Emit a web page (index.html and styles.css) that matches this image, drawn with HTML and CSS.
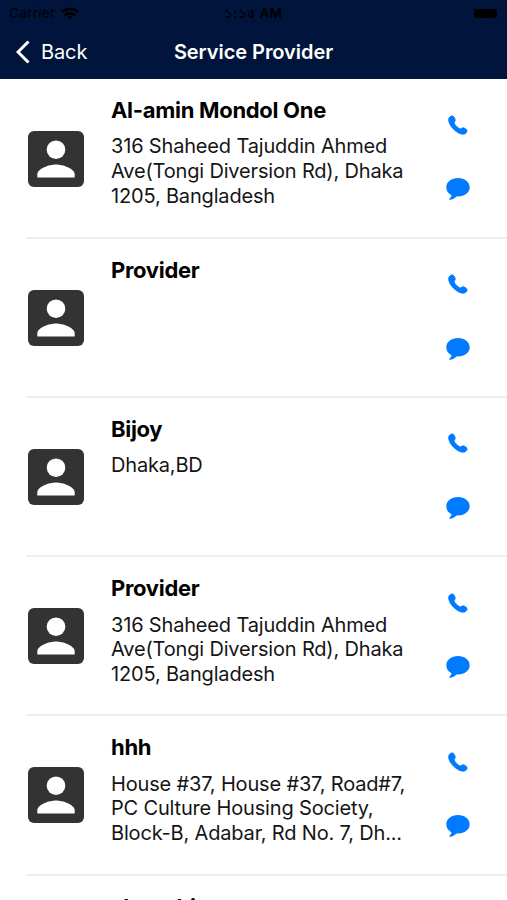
FILE: index.html
```html
<!DOCTYPE html>
<html lang="en">
<head>
<meta charset="utf-8">
<title>Service Provider</title>
<link rel="stylesheet" href="styles.css">
</head>
<body>
<svg class="defs" width="0" height="0">
  <symbol id="person" viewBox="0 0 56 56"><rect width="56" height="56" rx="6" fill="#333"/><circle cx="28" cy="18.7" r="9.3" fill="#fff"/><path d="M9.3 46.5v-3c0-6 12-10 18.7-10s18.7 4 18.7 10v3z" fill="#fff"/></symbol>
  <symbol id="phone" viewBox="0 0 20 20"><path d="M.9 3.300C1.800 1.300 4.100.200 5.400 1.400c1.100 1.200 1.900 2.900 1.800 4-.1 1-1.300 1.600-1.100 2.600.4 1.800 4.400 5.600 6 5.900 1 .2 1.700-1.100 2.800-1.100 1.200 0 3 1 3.800 2.100 1.100 1.600-.6 3.800-2.600 4.200C9.900 20.300-1.100 9.600.9 3.300z" fill="#007aff" stroke="#007aff" stroke-width=".9"/></symbol>
  <symbol id="bubble" viewBox="0 0 24 22"><path d="M12 0c6.600 0 11.700 4 11.700 9.200s-5.100 9.300-11.700 9.300l-1.600-.1C8.800 20 6.300 21.600 4 21.700c-1 0-.9-.8-.3-1.300.9-.8 1.700-2 1.800-3.100C2.200 15.600.3 12.700.3 9.200.3 4 5.400 0 12 0z" fill="#007aff"/></symbol>
</svg>
<header class="header">
  <div class="status">
    <div class="carrier"><span>Carrier</span><svg width="18" height="13" viewBox="0 0 18 13" fill="none" stroke="#000" stroke-width="2.600"><path d="M1 5a12 12 0 0 1 16 0M4 8.300a7.500 7.500 0 0 1 10 0"/><path d="M6.300 10.200a4 4 0 0 1 5.400 0L9 13z" fill="#000" stroke="none"/></svg></div>
    <time class="time">১:১৫ AM</time>
    <span class="battery"></span>
  </div>
  <nav class="nav">
    <a class="back"><svg width="14" height="24" viewBox="0 0 14 24"><path d="M12.500 1.500 2 12l10.500 10.500" fill="none" stroke="#fff" stroke-width="3"/></svg><span>Back</span></a>
    <h1 class="title">Service Provider</h1>
  </nav>
</header>
<main class="list">
  <article class="row"><svg class="avatar"><use href="#person"/></svg><div class="info"><h2>Al-amin Mondol One</h2><p>316 Shaheed Tajuddin Ahmed<br>Ave(Tongi Diversion Rd), Dhaka<br>1205, Bangladesh</p></div><div class="actions"><svg class="phone"><use href="#phone"/></svg><svg class="bubble"><use href="#bubble"/></svg></div></article>
  <article class="row"><svg class="avatar"><use href="#person"/></svg><div class="info"><h2>Provider</h2></div><div class="actions"><svg class="phone"><use href="#phone"/></svg><svg class="bubble"><use href="#bubble"/></svg></div></article>
  <article class="row"><svg class="avatar"><use href="#person"/></svg><div class="info"><h2>Bijoy</h2><p>Dhaka,BD</p></div><div class="actions"><svg class="phone"><use href="#phone"/></svg><svg class="bubble"><use href="#bubble"/></svg></div></article>
  <article class="row"><svg class="avatar"><use href="#person"/></svg><div class="info"><h2>Provider</h2><p>316 Shaheed Tajuddin Ahmed<br>Ave(Tongi Diversion Rd), Dhaka<br>1205, Bangladesh</p></div><div class="actions"><svg class="phone"><use href="#phone"/></svg><svg class="bubble"><use href="#bubble"/></svg></div></article>
  <article class="row"><svg class="avatar"><use href="#person"/></svg><div class="info"><h2>hhh</h2><p>House #37, House #37, Road#7,<br>PC Culture Housing Society,<br>Block-B, Adabar, Rd No. 7, Dh...</p></div><div class="actions"><svg class="phone"><use href="#phone"/></svg><svg class="bubble"><use href="#bubble"/></svg></div></article>
  <article class="row"><div class="info last"><h2>shaonhi</h2></div></article>
</main>
</body>
</html>
```
FILE: styles.css
```css
* { box-sizing: border-box; }
body { margin: 0; height: 900px; overflow: hidden; background: #fff; color: #000; font-family: Inter, "Liberation Sans", sans-serif; }
h1, h2, p { margin: 0; }
svg { display: block; flex: none; }
.defs { position: absolute; }
.header { height: 79px; background: #00143c; }
.status { height: 27px; display: grid; grid-template-columns: 1fr auto 1fr; align-items: center; padding: 0 10px 0 9px; font-size: 13.500px; line-height: 27px; }
.carrier { display: flex; align-items: center; gap: 6px; letter-spacing: .3px; }
.time { font-weight: 600; letter-spacing: .2px; }
.battery { justify-self: end; width: 23px; height: 9px; border-radius: 2px; background: #000; }
.nav { height: 50px; display: grid; grid-template-columns: 1fr auto 1fr; align-items: center; padding: 0 16px; color: #fff; }
.back { display: flex; align-items: center; gap: 11px; font-size: 20px; letter-spacing: -.1px; }
.title { font-size: 20px; font-weight: 600; letter-spacing: -.05px; }
.list { height: 821px; overflow: hidden; }
.row { height: 159.200px; display: flex; margin-left: 26px; border-bottom: 2px solid #efefef; }
.row:first-child { height: 159.800px; }
.avatar { width: 56px; height: 56px; margin: 51.500px 27px 0 2px; }
.row:not(:first-child) .avatar { margin-top: 51px; }
.info { width: 335px; padding-top: 16.900px; white-space: nowrap; }
.info h2 { font-size: 22px; line-height: 29px; font-weight: 650; letter-spacing: -.3px; }
.info p { margin-top: 9.500px; font-size: 20px; line-height: 24.600px; letter-spacing: -.17px; color: #151515; }
.last { margin-left: 85px; padding-top: 17px; }
.last h2 { letter-spacing: -.1px; }
.actions { display: flex; flex-direction: column; align-items: center; width: 24px; padding-top: 35.500px; gap: 43.500px; }
.phone { width: 20px; height: 20px; }
.bubble { width: 24px; height: 22px; }
```
